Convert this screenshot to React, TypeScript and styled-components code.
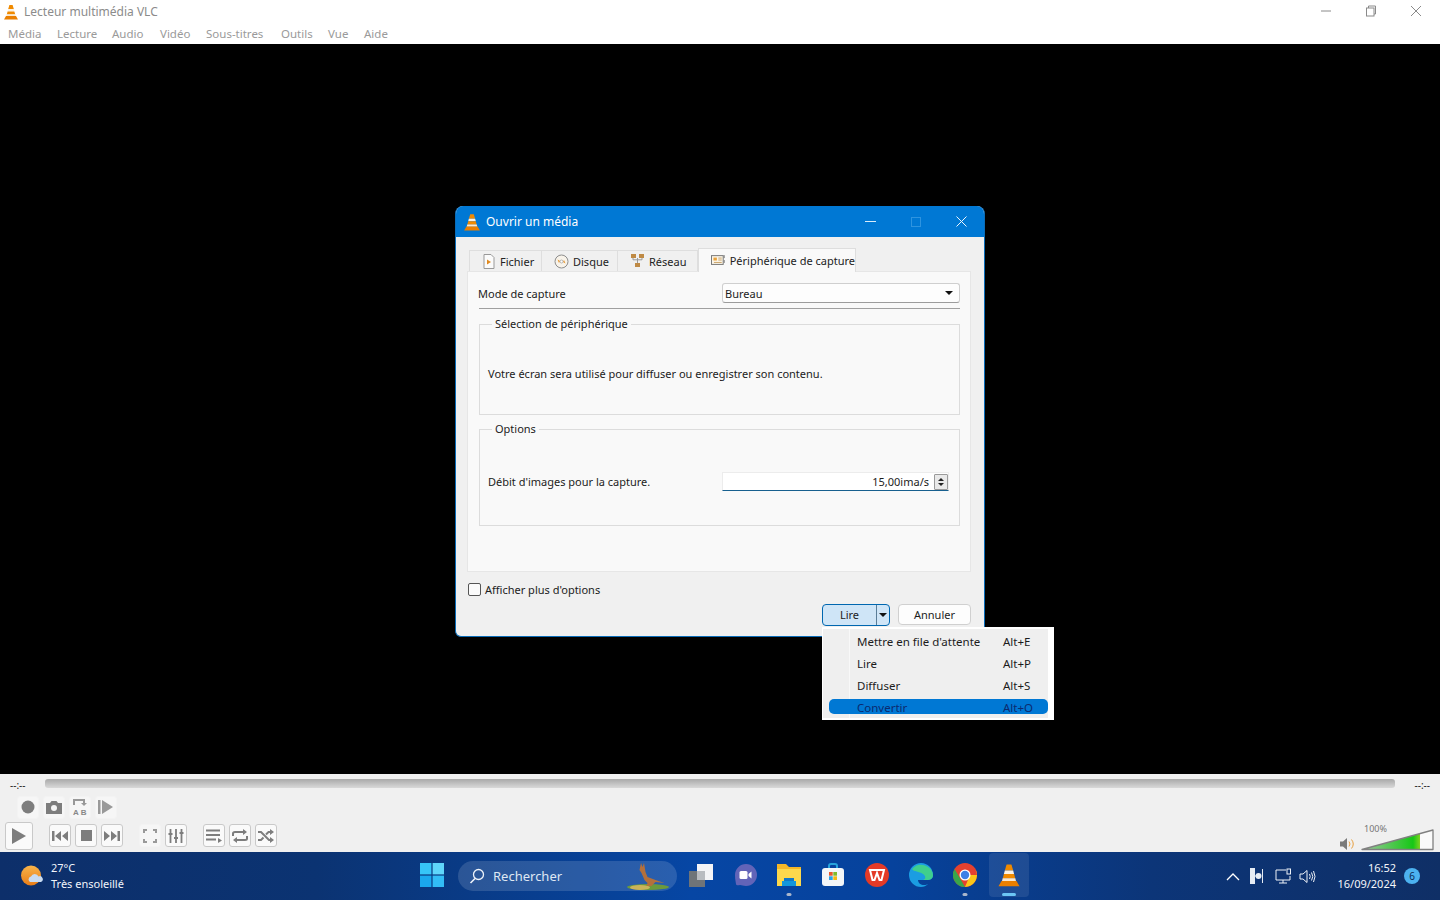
import React from 'react';
import styled, { createGlobalStyle } from 'styled-components';

const Global = createGlobalStyle`
  html, body { margin: 0; padding: 0; width: 1440px; height: 900px; overflow: hidden; background: #000; }
  body { font-family: "Noto Sans", "Open Sans", sans-serif; font-size: 11px; color: #1c1c1c; }
  * { box-sizing: border-box; }
`;

const Page = styled.div`width: 1440px; height: 900px; display: flex; flex-direction: column;`;

/* ---------- main window chrome ---------- */
const TopBar = styled.header`height: 44px; background: #fff; display: flex; flex-direction: column; position: relative;`;
const TitleRow = styled.div`height: 23px; display: flex; align-items: center; padding-left: 3px; gap: 5px; color: #8b8b8b; font-size: 12px;`;
const MenuRow = styled.nav`height: 21px; display: flex; align-items: center; padding-left: 8px; color: #9a9a9a; font-size: 11.5px;`;
const MenuItem = styled.span<{ $w: number }>`width: ${p => p.$w}px; white-space: nowrap;`;
const WinButtons = styled.div`position: absolute; right: 0; top: 0; height: 22px; display: flex; align-items: center; padding-right: 18px; gap: 33px;`;

const Video = styled.main`flex: 1; background: #000; position: relative;`;

/* ---------- dialog ---------- */
const Dialog = styled.section`
  position: absolute; left: 455px; top: 162px; width: 530px; height: 431px;
  background: #f0f0f0; border: 1px solid #0a6cb8; border-top: 0; border-radius: 8px 8px 6px 6px; overflow: hidden;
  display: flex; flex-direction: column;
`;
const DialogTitle = styled.div`height: 31px; background: #0078d4; color: #fff; display: flex; align-items: center; padding-left: 8px; gap: 5px; font-size: 12px; position: relative; margin: 0 -1px;`;
const DialogButtons = styled.div`margin-left: auto; display: flex; align-items: center; gap: 35px; padding-right: 18px;`;
const DialogBody = styled.div`flex: 1; padding: 11px 13px 0 11px; display: flex; flex-direction: column;`;
const Tabs = styled.div`display: flex; align-items: flex-end; height: 23px; padding-left: 2px;`;
const Tab = styled.div<{ $w: number; $active?: boolean }>`
  width: ${p => p.$w}px; height: ${p => (p.$active ? 24 : 21)}px; margin-bottom: ${p => (p.$active ? -1 : 0)}px;
  background: ${p => (p.$active ? '#f9f9f9' : '#f0f0f0')};
  border: 1px solid #dedede; border-bottom: 0; border-left-width: ${p => (p.$active ? 1 : 0)}px;
  display: flex; align-items: center; gap: 4px; padding-left: ${p => (p.$active ? 12 : 12)}px; font-size: 11px; color: #222; white-space: nowrap;
  position: relative; z-index: ${p => (p.$active ? 2 : 0)};
  &:first-child { border-left-width: 1px; }
`;
const Panel = styled.div`height: 301px; background: #f9f9f9; border: 1px solid #e6e6e6; padding: 11px 10px 0 10px; display: flex; flex-direction: column;`;
const ModeRow = styled.div`display: flex; justify-content: space-between; align-items: center; height: 20px; padding-right: 0;`;
const Label = styled.span`font-size: 11px; color: #1c1c1c; white-space: nowrap;`;
const Combo = styled.div`width: 238px; height: 20px; background: #fdfdfd; border: 1px solid #cfcfcf; border-bottom-color: #9c9c9c; border-radius: 3px; display: flex; align-items: center; justify-content: space-between; padding: 0 6px 0 2px; font-size: 11px;`;
const Arrow = styled.i<{ $c?: string }>`display: block; width: 0; height: 0; border-left: 4px solid transparent; border-right: 4px solid transparent; border-top: 4px solid ${p => p.$c || '#111'};`;
const Separator = styled.hr`margin: 5px 0 0 1px; border: 0; height: 1px; background: #a0a0a0;`;
const Group = styled.fieldset<{ $h: number; $gap: number; $pt: number }>`
  margin: ${p => p.$gap}px 0 0 1px; padding: ${p => p.$pt}px 10px 0 8px; height: ${p => p.$h}px; border: 1px solid #dcdcdc; min-width: 0;
`;
const Legend = styled.legend`padding: 0 3px 0 3px; margin-left: 4px; font-size: 11px; line-height: 14px; color: #1c1c1c;`;
const GroupRow = styled.div`display: flex; justify-content: space-between; align-items: center;`;
const Spin = styled.div`width: 227px; height: 19px; background: #fff; border: 1px solid #ececec; border-bottom: 1px solid #17608f; display: flex; align-items: center; justify-content: flex-end; padding-right: 0; gap: 5px; font-size: 11px;`;
const SpinBtns = styled.div`width: 14px; height: 16px; background: #e9e9e9; border: 1px solid #9a9a9a; display: flex; flex-direction: column; align-items: center; justify-content: center; gap: 2px; border-radius: 1px;`;
const Up = styled.i`display: block; width: 0; height: 0; border-left: 3px solid transparent; border-right: 3px solid transparent; border-bottom: 3px solid #222;`;
const Down = styled.i`display: block; width: 0; height: 0; border-left: 3px solid transparent; border-right: 3px solid transparent; border-top: 3px solid #222;`;
const CheckRow = styled.div`display: flex; align-items: center; gap: 4px; margin-top: 10px; height: 14px; padding-left: 1px;`;
const Box = styled.span`width: 13px; height: 13px; background: #fbfbfb; border: 1px solid #555; border-radius: 2px;`;
const ButtonRow = styled.div`display: flex; justify-content: flex-end; gap: 8px; margin-top: 8px; padding-right: 0;`;
const Split = styled.div`width: 68px; height: 22px; background: #cfe5f7; border: 1px solid #0067b0; border-radius: 4px; display: flex; align-items: center; font-size: 11px;`;
const SplitMain = styled.span`width: 54px; text-align: center; border-right: 1px solid #5a7d98; height: 20px; line-height: 20px;`;
const SplitArrow = styled.span`flex: 1; display: flex; justify-content: center;`;
const Cancel = styled.div`width: 73px; height: 21px; background: #fdfdfd; border: 1px solid #d0d0d0; border-radius: 4px; display: flex; align-items: center; justify-content: center; font-size: 11px;`;

/* ---------- popup menu ---------- */
const Popup = styled.div`
  position: absolute; left: 822px; top: 583px; width: 232px; height: 93px; background: #efefef;
  border: 2px solid #fff; border-right-width: 6px; border-left-width: 1px; padding-top: 1px;
`;
const Gutter = styled.span`position: absolute; left: 26px; top: 0; bottom: 0; width: 1px; background: #f8f8f8;`;
const PopRow = styled.div<{ $sel?: boolean }>`
  height: 22px; display: flex; align-items: center; padding-left: 34px; font-size: 11.5px; position: relative; color: ${p => (p.$sel ? '#0b2a6f' : '#1c1c1c')};
  ${p => p.$sel ? `&::before { content: ''; position: absolute; left: 6px; right: 0; top: 3px; height: 15px; background: #0078d4; border-radius: 5px; }` : ''}
  & > span { position: relative; }
`;
const PopName = styled.span`width: 146px; white-space: nowrap;`;

/* ---------- VLC controls ---------- */
const Controls = styled.section`height: 78px; background: #f0f0f0; display: flex; flex-direction: column;`;
const SeekRow = styled.div`height: 21px; display: flex; align-items: center; padding: 0 10px; gap: 19px; font-size: 10px; color: #222;`;
const Seek = styled.div`flex: 1; height: 9px; border-radius: 3px; margin-top: -3px; background: linear-gradient(#a9a9a9, #d9d9d9);`;
const RowA = styled.div`height: 24px; display: flex; align-items: center; gap: 4px; padding-left: 17px;`;
const RowB = styled.div`height: 33px; display: flex; align-items: center; padding-left: 5px; position: relative;`;
const Cluster = styled.div<{ $ml: number }>`display: flex; gap: 4px; margin-left: ${p => p.$ml}px;`;
const CtlBtn = styled.div<{ $flat?: boolean; $size?: number }>`
  width: ${p => p.$size || 22}px; height: ${p => p.$size || 23}px; border-radius: 3px; display: flex; align-items: center; justify-content: center;
  background: ${p => (p.$flat ? '#f6f6f6' : '#fafafa')};
  border: 1px solid ${p => (p.$flat ? '#f3f3f3' : '#c9c9c9')};
`;
const Volume = styled.div`margin-left: auto; display: flex; align-items: flex-end; gap: 6px; padding: 0 6px 0 0; height: 33px; position: relative;`;
const VolPct = styled.span`position: absolute; left: 24px; top: 3px; font-size: 9px; color: #777;`;

/* ---------- taskbar ---------- */
const Taskbar = styled.footer`
  height: 48px; color: #fff; display: flex; align-items: center; position: relative;
  background: linear-gradient(90deg, #0d2f6a 0%, #0b3372 22%, #0646a4 48%, #06429c 62%, #0c3578 80%, #0f2f66 100%);
`;
const Weather = styled.div`width: 410px; display: flex; align-items: center; gap: 8px; padding-left: 21px;`;
const WeatherText = styled.div`display: flex; flex-direction: column; font-size: 11px; line-height: 16px; color: #f1f5fb;`;
const TaskSlot = styled.div<{ $active?: boolean }>`
  width: 44px; height: 44px; margin-top: -2px; display: flex; align-items: center; justify-content: center; position: relative; flex: none;
  border-radius: 4px; ${p => p.$active ? 'background: rgba(255,255,255,.09); width: 40px; margin: -2px 2px 0;' : ''}
`;
const Dot = styled.i<{ $wide?: boolean }>`position: absolute; bottom: 1px; left: 50%; transform: translateX(-50%); height: 3px; border-radius: 2px; width: ${p => (p.$wide ? 14 : 5)}px; background: ${p => (p.$wide ? '#6cc6f5' : '#a9b6cb')};`;
const SearchBox = styled.div`width: 219px; height: 30px; margin-left: 4px; margin-right: 2px; border-radius: 15px; background: rgba(255,255,255,.14); display: flex; align-items: center; padding-left: 11px; gap: 8px; font-size: 13px; color: #dfe7f3; position: relative; flex: none;`;
const Roo = styled.span`position: absolute; right: 3px; top: 1px; line-height: 0;`;
const Tray = styled.div`margin-left: auto; display: flex; align-items: center; height: 100%;`;
const TrayIcon = styled.span<{ $w: number }>`width: ${p => p.$w}px; display: flex; justify-content: center;`;
const Clock = styled.div`width: 73px; margin-left: 5px; display: flex; flex-direction: column; align-items: flex-end; font-size: 11px; line-height: 16px; color: #f4f6fa;`;
const Badge = styled.span`width: 16px; height: 16px; border-radius: 50%; background: #4cb2f0; color: #0b2a55; font-size: 10px; display: flex; align-items: center; justify-content: center; margin: 0 20px 0 8px;`;

/* ---------- drawings ---------- */
const Cone = ({ s = 16 }: { s?: number }) => (
  <svg width={s} height={s} viewBox="0 0 16 16">
    <path d="M6.4 1h3.2l1.2 4H5.2z" fill="#f08a00" />
    <path d="M5.2 5h5.6l.6 2.4H4.6z" fill="#fbf3e6" />
    <path d="M4.6 7.4h6.8l.8 3H3.8z" fill="#f08a00" />
    <path d="M3.8 10.2h8.4l.5 2H3.3z" fill="#fbe9cf" />
    <path d="M1 15.5 3 12h10l2 3.5z" fill="#ea7f00" />
  </svg>
);
const S = { fill: 'none', stroke: '#8a8a8a', strokeWidth: 1 };
const Gray = '#7d7d7d';

const FileIco = () => (
  <svg width="14" height="15" viewBox="0 0 14 15"><path d="M2 .5h7l3 3v11H2z" fill="#fbfbfb" stroke="#999" /><path d="M5 5.5v5l4-2.5z" fill="#e08a20" /></svg>
);
const DiscIco = () => (
  <svg width="15" height="15" viewBox="0 0 15 15"><circle cx="7.5" cy="7.5" r="6.5" fill="#f8f3ea" stroke="#8d8d8d" /><path d="M3.5 5.5 6 7l-1 2zM11.5 9.5 9 8l1-2z" fill="#e9952b" /><circle cx="7.5" cy="7.5" r="1.5" fill="#fff" stroke="#999" strokeWidth=".7" /></svg>
);
const NetIco = () => (
  <svg width="15" height="14" viewBox="0 0 15 14"><path d="M7.5 4v5M3 4v1.8h9V4" fill="none" stroke="#999" /><rect x="1" y="0" width="5" height="4" fill="#bf8a45" /><rect x="9" y="0" width="5" height="4" fill="#bf8a45" /><rect x="5" y="9" width="5" height="4" fill="#bf8a45" /></svg>
);
const CaptureIco = () => (
  <svg width="15" height="14" viewBox="0 0 15 14"><rect x=".5" y="1.5" width="12" height="9" fill="#fbf5e8" stroke="#777" /><rect x="2.5" y="3.5" width="3.5" height="3" fill="#e9a23c" /><path d="M7.5 4h3.5M7.5 6h3.5M3 8.5h8" stroke="#c9a26a" /><path d="M13.5 1v3M13.5 6v3" stroke="#777" /></svg>
);
const Windows = () => (
  <svg width="24" height="24" viewBox="0 0 24 24"><rect x="0" y="0" width="11.4" height="11.4" fill="#36c5f8" /><rect x="12.6" y="0" width="11.4" height="11.4" fill="#5fd6fb" /><rect x="0" y="12.6" width="11.4" height="11.4" fill="#1aa8ee" /><rect x="12.6" y="12.6" width="11.4" height="11.4" fill="#32bdf6" /></svg>
);
const Kangaroo = () => (
  <svg width="48" height="28" viewBox="0 0 48 28">
    <ellipse cx="22" cy="25" rx="21" ry="3" fill="#6c9a3c" />
    <ellipse cx="14" cy="25.5" rx="10" ry="2.5" fill="#c9b35a" />
    <path d="M15 1l1.5 4 1.5-4 1 6 .5 3 2 5 8 3 9 3-9-1 -4 4h-5l1-3-3-3-3-7-2-3z" fill="#b4703c" />
  </svg>
);

export default function App() {
  return (
    <Page>
      <Global />
      <TopBar>
        <TitleRow><Cone s={16} />Lecteur multimédia VLC</TitleRow>
        <MenuRow>
          <MenuItem $w={49}>Média</MenuItem>
          <MenuItem $w={55}>Lecture</MenuItem>
          <MenuItem $w={48}>Audio</MenuItem>
          <MenuItem $w={46}>Vidéo</MenuItem>
          <MenuItem $w={75}>Sous-titres</MenuItem>
          <MenuItem $w={47}>Outils</MenuItem>
          <MenuItem $w={36}>Vue</MenuItem>
          <MenuItem $w={30}>Aide</MenuItem>
        </MenuRow>
        <WinButtons>
          <svg width="12" height="12" viewBox="0 0 12 12"><path d="M1 6h10" {...S} /></svg>
          <svg width="12" height="12" viewBox="0 0 12 12"><rect x="1.5" y="3" width="7.5" height="8" {...S} /><path d="M3.5 3V1h7v8H9" {...S} /></svg>
          <svg width="12" height="12" viewBox="0 0 12 12"><path d="M1 1l10 10M11 1 1 11" {...S} /></svg>
        </WinButtons>
      </TopBar>

      <Video>
        <Dialog>
          <DialogTitle>
            <Cone s={18} />Ouvrir un média
            <DialogButtons>
              <svg width="11" height="11" viewBox="0 0 11 11"><path d="M0 5.5h11" stroke="#d8ecfb" /></svg>
              <svg width="10" height="10" viewBox="0 0 10 10"><rect x=".5" y=".5" width="9" height="9" fill="none" stroke="#2e94e0" /></svg>
              <svg width="11" height="11" viewBox="0 0 11 11"><path d="M.5.5l10 10M10.5.5l-10 10" stroke="#eef6fd" /></svg>
            </DialogButtons>
          </DialogTitle>
          <DialogBody>
            <Tabs>
              <Tab $w={73}><FileIco />Fichier</Tab>
              <Tab $w={76}><DiscIco />Disque</Tab>
              <Tab $w={80}><NetIco />Réseau</Tab>
              <Tab $w={158} $active><CaptureIco />Périphérique de capture</Tab>
            </Tabs>
            <Panel>
              <ModeRow>
                <Label>Mode de capture</Label>
                <Combo>Bureau<Arrow /></Combo>
              </ModeRow>
              <Separator />
              <Group $h={98} $gap={8} $pt={35}>
                <Legend>Sélection de périphérique</Legend>
                <Label>Votre écran sera utilisé pour diffuser ou enregistrer son contenu.</Label>
              </Group>
              <Group $h={104} $gap={7} $pt={36}>
                <Legend>Options</Legend>
                <GroupRow>
                  <Label>Débit d'images pour la capture.</Label>
                  <Spin>15,00ima/s<SpinBtns><Up /><Down /></SpinBtns></Spin>
                </GroupRow>
              </Group>
            </Panel>
            <CheckRow><Box /><Label>Afficher plus d'options</Label></CheckRow>
            <ButtonRow>
              <Split><SplitMain>Lire</SplitMain><SplitArrow><Arrow /></SplitArrow></Split>
              <Cancel>Annuler</Cancel>
            </ButtonRow>
          </DialogBody>
        </Dialog>

        <Popup>
          <Gutter />
          <PopRow><PopName>Mettre en file d'attente</PopName><span>Alt+E</span></PopRow>
          <PopRow><PopName>Lire</PopName><span>Alt+P</span></PopRow>
          <PopRow><PopName>Diffuser</PopName><span>Alt+S</span></PopRow>
          <PopRow $sel><PopName>Convertir</PopName><span>Alt+O</span></PopRow>
        </Popup>
      </Video>

      <Controls>
        <SeekRow><span>--:--</span><Seek /><span>--:--</span></SeekRow>
        <RowA>
          <CtlBtn $flat><svg width="14" height="14" viewBox="0 0 14 14"><circle cx="7" cy="7" r="6.5" fill={Gray} /></svg></CtlBtn>
          <CtlBtn $flat><svg width="16" height="14" viewBox="0 0 16 14"><path d="M0 3h4l1.5-2h5L12 3h4v11H0z" fill={Gray} /><circle cx="8" cy="8" r="3" fill="#f6f6f6" /></svg></CtlBtn>
          <CtlBtn $flat><svg width="14" height="18" viewBox="0 0 14 18"><path d="M1 7V2h10v3" fill="none" stroke="#999" strokeWidth="2" /><path d="M8 5h6l-3 3z" fill="#999" /><text x="0" y="17" fontSize="8" fontFamily="Liberation Sans" fill="#888" fontWeight="700">A B</text></svg></CtlBtn>
          <CtlBtn $flat><svg width="16" height="14" viewBox="0 0 16 14"><rect x="0" y="0" width="2.5" height="14" fill="#999" /><path d="M4 0v14l11-7z" fill="#999" /></svg></CtlBtn>
        </RowA>
        <RowB>
          <CtlBtn $size={28}><svg width="16" height="18" viewBox="0 0 16 18"><path d="M1 1v16l14-8z" fill={Gray} /></svg></CtlBtn>
          <Cluster $ml={16}>
            <CtlBtn><svg width="16" height="10" viewBox="0 0 16 10"><rect width="2.5" height="10" fill={Gray} /><path d="M9 0v10L3 5zM16 0v10L10 5z" fill={Gray} /></svg></CtlBtn>
            <CtlBtn><svg width="11" height="11" viewBox="0 0 11 11"><rect width="11" height="11" fill={Gray} /></svg></CtlBtn>
            <CtlBtn><svg width="16" height="10" viewBox="0 0 16 10"><rect x="13.5" width="2.5" height="10" fill={Gray} /><path d="M0 0v10l6-5zM7 0v10l6-5z" fill={Gray} /></svg></CtlBtn>
          </Cluster>
          <Cluster $ml={16}>
            <CtlBtn $flat><svg width="14" height="14" viewBox="0 0 14 14"><path d="M1 4V1h3M10 1h3v3M13 10v3h-3M4 13H1v-3" fill="none" stroke="#999" strokeWidth="2" /></svg></CtlBtn>
            <CtlBtn><svg width="16" height="14" viewBox="0 0 16 14"><path d="M2.5 0v14M8 0v14M13.5 0v14" stroke={Gray} strokeWidth="1.8" /><path d="M.5 4h4v2h-4zM6 8h4v2H6zM11.5 3h4v2h-4z" fill={Gray} /></svg></CtlBtn>
          </Cluster>
          <Cluster $ml={16}>
            <CtlBtn><svg width="16" height="14" viewBox="0 0 16 14"><path d="M0 1.5h14M0 6h14M0 10.500h10" stroke={Gray} strokeWidth="2" /><path d="M12 9l4 2.500L12 14z" fill={Gray} /></svg></CtlBtn>
            <CtlBtn><svg width="16" height="14" viewBox="0 0 16 14"><path d="M1 7V4.500Q1 3 3 3h10M15 7v2.500Q15 11 13 11H3" fill="none" stroke={Gray} strokeWidth="2" /><path d="M11 0l4 3-4 3zM5 8l-4 3 4 3z" fill={Gray} /></svg></CtlBtn>
            <CtlBtn><svg width="16" height="14" viewBox="0 0 16 14"><path d="M0 3h3l8 8h2M0 11h3l2.500-2.500M8 5.500 10.500 3H13" fill="none" stroke={Gray} strokeWidth="2" /><path d="M12 0l4 3-4 3zM12 8l4 3-4 3z" fill={Gray} /></svg></CtlBtn>
          </Cluster>
          <Volume>
            <svg width="15" height="14" viewBox="0 0 15 14" style={{ marginBottom: 1 }}><path d="M0 4.500h3L7 1v12L3 9.500H0z" fill="#7a7a7a" /><path d="M9 4.500q2 2.500 0 5M11.500 2.500q3.500 4.500 0 9" fill="none" stroke="#e8a040" /></svg>
            <VolPct>100%</VolPct>
            <svg width="73" height="22" viewBox="0 0 73 22" style={{ marginBottom: 1 }}>
              <defs><linearGradient id="vol" x1="0" x2="1"><stop offset="0" stopColor="#9fc89f" /><stop offset=".88" stopColor="#16c716" /><stop offset="1" stopColor="#7ed321" /></linearGradient></defs>
              <path d="M1 20.500 59 4.500V20.500z" fill="url(#vol)" />
              <path d="M59 4.500 72 1v19.500H59z" fill="#fafafa" />
              <path d="M1 20.500 72 1v19.500z" fill="none" stroke="#808080" strokeWidth="1.300" strokeLinejoin="round" />
            </svg>
          </Volume>
        </RowB>
      </Controls>

      <Taskbar>
        <Weather>
          <svg width="22" height="22" viewBox="0 0 22 22">
            <defs><linearGradient id="sun" x1="0" y1="0" x2="0" y2="1"><stop offset="0" stopColor="#f8b44a" /><stop offset="1" stopColor="#ea7d17" /></linearGradient></defs>
            <circle cx="10" cy="10.500" r="10" fill="url(#sun)" />
            <path d="M9 17a3 3 0 0 1 1-5.500 4 4 0 0 1 7.500 0A3 3 0 0 1 20 17z" fill="#c9dcf2" />
          </svg>
          <WeatherText><span>27°C</span><span>Très ensoleillé</span></WeatherText>
        </Weather>
        <TaskSlot><Windows /></TaskSlot>
        <SearchBox>
          <svg width="16" height="16" viewBox="0 0 16 16"><circle cx="9.500" cy="6.500" r="5" fill="none" stroke="#eef3fa" strokeWidth="1.300" /><path d="M6 10.500 1.500 15" stroke="#eef3fa" strokeWidth="1.600" /></svg>
          Rechercher
          <Roo><Kangaroo /></Roo>
        </SearchBox>
        <TaskSlot>
          <svg width="24" height="24" viewBox="0 0 24 24"><rect x="0" y="8" width="16" height="16" fill="#6f7478" /><rect x="8" y="1" width="16" height="16" fill="#f4f4f6" /><rect x="8" y="8" width="8" height="9" fill="#b9bcc0" /></svg>
        </TaskSlot>
        <TaskSlot>
          <svg width="24" height="24" viewBox="0 0 24 24"><path d="M13 1a11 11 0 0 1 0 22c-3 0-4-1-6-1-2 .5-4 .5-4-1 0-1-1-4-1-9A11 11 0 0 1 13 1z" fill="#6264b8" /><rect x="6.500" y="8" width="8" height="8" rx="1.500" fill="#fff" /><path d="M15.500 11l3-2.500v7l-3-2.500z" fill="#fff" /></svg>
        </TaskSlot>
        <TaskSlot>
          <svg width="24" height="24" viewBox="0 0 24 24"><path d="M0 1h9l3 3h12v5H0z" fill="#f4b728" /><rect x="0" y="6" width="24" height="17" fill="#fcd84c" /><rect x="7" y="15" width="10" height="8" fill="#0f78c9" /><rect x="5" y="18" width="14" height="5" fill="#1497dc" /></svg>
          <Dot />
        </TaskSlot>
        <TaskSlot>
          <svg width="24" height="24" viewBox="0 0 24 24"><path d="M8 5V3a2 2 0 0 1 2-2h4a2 2 0 0 1 2 2v2" fill="none" stroke="#27a3dc" strokeWidth="2" /><rect x="1" y="5" width="22" height="18" rx="3" fill="#f3f6f8" /><rect x="8" y="9" width="3.700" height="3.700" fill="#e8552c" /><rect x="12.300" y="9" width="3.700" height="3.700" fill="#7fba2c" /><rect x="8" y="13.300" width="3.700" height="3.700" fill="#2aa2e6" /><rect x="12.300" y="13.300" width="3.700" height="3.700" fill="#f7b912" /></svg>
        </TaskSlot>
        <TaskSlot>
          <svg width="24" height="24" viewBox="0 0 24 24"><circle cx="12" cy="12" r="12" fill="#e33a27" /><path d="M5 7h14l-2.500 10h-2L12 10l-2.500 7h-2z" fill="none" stroke="#fff" strokeWidth="2" /></svg>
        </TaskSlot>
        <TaskSlot>
          <svg width="24" height="24" viewBox="0 0 24 24"><path d="M12 0A12 12 0 0 1 24 12c0 4-3 5-6 5H9c0 3 3 5 6 5 2 0 3-.5 4-1-2 2-4 3-7 3A12 12 0 0 1 0 12 12 12 0 0 1 12 0z" fill="#1b9de2" /><path d="M3 6a12 12 0 0 1 21 6c0 4-3 5-6 5h-4c3-1 3-4 0-6-4-3-9-2-11-5z" fill="#3fcf8e" /></svg>
        </TaskSlot>
        <TaskSlot>
          <svg width="24" height="24" viewBox="0 0 24 24"><circle cx="12" cy="12" r="12" fill="#e4412f" /><path d="M12 24A12 12 0 0 1 1.600 6L8 17l4 7z" fill="#3aa64a" /><path d="M12 24l5-12 5.900-5A12 12 0 0 1 12 24z" fill="#fbc617" /><path d="M12 6.500h10.400A12 12 0 0 1 24 12l-7 0z" fill="#e4412f" /><circle cx="12" cy="12" r="5.500" fill="#fff" /><circle cx="12" cy="12" r="4.200" fill="#3d7fe6" /></svg>
          <Dot />
        </TaskSlot>
        <TaskSlot $active>
          <Cone s={24} />
          <Dot $wide />
        </TaskSlot>
        <Tray>
          <TrayIcon $w={22}><svg width="14" height="9" viewBox="0 0 14 9"><path d="M1 8l6-6 6 6" fill="none" stroke="#fff" strokeWidth="1.300" /></svg></TrayIcon>
          <TrayIcon $w={26}><svg width="15" height="16" viewBox="0 0 15 16"><rect x="0" y="0" width="5" height="16" fill="#e6ecf4" /><circle cx="8.500" cy="8" r="3" fill="#e6ecf4" /><path d="M12.500 1v14" stroke="#e6ecf4" /><path d="M5 8h4" stroke="#e6ecf4" /></svg></TrayIcon>
          <TrayIcon $w={26}><svg width="17" height="16" viewBox="0 0 17 16"><path d="M11 2H1v10h14V8M8 12v3M4 15h8" fill="none" stroke="#eef2f8" /><rect x="12" y="1" width="3.500" height="5" fill="none" stroke="#eef2f8" /></svg></TrayIcon>
          <TrayIcon $w={22}><svg width="17" height="15" viewBox="0 0 17 15"><path d="M1 5h3l4-3.500v12L4 10H1z" fill="none" stroke="#eef2f8" /><path d="M10.500 5q1.500 2.500 0 5M12.500 3.500q2.500 4 0 8M14.500 2q3 5.500 0 11" fill="none" stroke="#eef2f8" /></svg></TrayIcon>
          <Clock><span>16:52</span><span>16/09/2024</span></Clock>
          <Badge>6</Badge>
        </Tray>
      </Taskbar>
    </Page>
  );
}
